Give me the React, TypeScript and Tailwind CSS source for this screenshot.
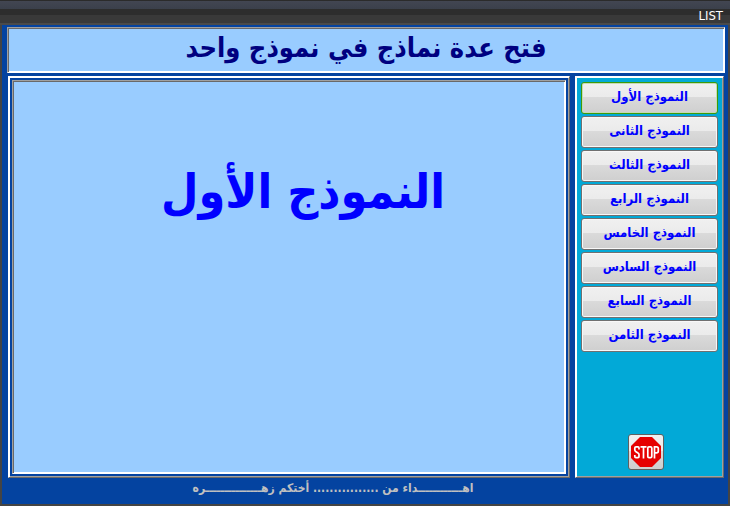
import { useState } from "react";

const FORMS = [
  "النموذج الأول",
  "النموذج الثانى",
  "النموذج الثالث",
  "النموذج الرابع",
  "النموذج الخامس",
  "النموذج السادس",
  "النموذج السابع",
  "النموذج الثامن",
];

// classic two-step bevels
const SUNKEN =
  "border border-t-[#a0a0a0] border-l-[#a0a0a0] border-r-white border-b-white shadow-[inset_1px_1px_0_#696969,inset_-1px_-1px_0_#ffffff]";
const RAISED =
  "border border-t-white border-l-white border-r-[#696969] border-b-[#696969] shadow-[inset_1px_1px_0_#ffffff,inset_-1px_-1px_0_#a0a0a0]";
const FACE =
  "rounded-[3px] border bg-[linear-gradient(#f0f0f0,#ebebeb_46%,#dadada_47%,#cfcfcf)]";

function StopIcon() {
  return (
    <svg viewBox="0 0 30 30" className="size-[30px]" aria-hidden="true">
      <path d="M9 0H21L30 9V21L21 30H9L0 21V9Z" fill="#e60000" />
      <g fill="none" stroke="#ffffff" strokeWidth="1.7">
        <path d="M8 12.500V11Q8 9.800 7 9.800H5Q3.800 9.800 3.800 11V13Q3.800 14 5 14.700L7 16Q8 16.600 8 17.500V19.500Q8 20.700 7 20.700H5Q3.800 20.700 3.800 19.500V18" />
        <path d="M9.500 9.800H15.500M12.500 10V21.500" />
        <path d="M18 9.800H19.500Q20.800 9.800 20.800 11V19.500Q20.800 20.700 19.500 20.700H18Q16.800 20.700 16.800 19.500V11Q16.800 9.800 18 9.800Z" />
        <path d="M23.500 21.500V9.800H25.500Q27.300 9.800 27.300 11.500V14Q27.300 15.800 25.500 15.800H23.500" />
      </g>
    </svg>
  );
}

export default function App() {
  const [active, setActive] = useState(0);

  return (
    <div
      dir="rtl"
      className="flex min-h-screen flex-col bg-[#0443a0] font-['DejaVu_Sans_Condensed','DejaVu_Sans',sans-serif]"
    >
      {/* title bar */}
      <div className="flex h-[25px] flex-col bg-[#393939]">
        <div className="h-[9px] border-t border-[#2b2b2b] bg-[linear-gradient(#424652,#3b404b)]" />
        <div
          dir="ltr"
          className="flex flex-1 items-center justify-end border-b-2 border-[#4a4a4a] bg-[linear-gradient(#2d2d2d_45%,#393939_46%)] pr-[7px] text-[13px] leading-[14px] text-white"
        >
          LIST
        </div>
      </div>

      <div className="flex flex-1 flex-col border-x-2 border-b-2 border-[#444444] pt-[2px] pr-[3px] pl-[5px]">
        <header className={`${SUNKEN} flex h-[46px] justify-center bg-[#99ccff]`}>
          <h1 className="text-[27px] leading-[40px] font-bold text-[#000080]">
            فتح عدة نماذج في نموذج واحد
          </h1>
        </header>

        <div className="mt-[3px] flex flex-1 gap-[5px] px-px">
          <aside
            className={`${RAISED} flex w-[149px] shrink-0 flex-col justify-between bg-[#02a9d7] px-[5px] pt-[5px] pb-[7px]`}
          >
            <nav className="flex w-full flex-col gap-[2px]">
              {FORMS.map((name, i) => (
                <button
                  key={name}
                  type="button"
                  onClick={() => setActive(i)}
                  className={`${FACE} h-[32px] pb-[2px] text-[13px] leading-[16px] font-bold text-[#0000ff] ${
                    i === active
                      ? "border-[#3f9a08] shadow-[inset_0_0_0_1px_#c4dcb4]"
                      : "border-[#707070] shadow-[inset_0_0_0_1px_#f8f8f8]"
                  }`}
                >
                  {name}
                </button>
              ))}
            </nav>
            <div className="flex justify-center ps-2">
              <button
                type="button"
                aria-label="STOP"
                className={`${FACE} flex size-[36px] items-center justify-center border-[#606060]`}
              >
                <StopIcon />
              </button>
            </div>
          </aside>

          <main className={`${RAISED} flex min-w-0 flex-1 bg-[#0443a0] p-[3px]`}>
            <section className={`${SUNKEN} flex flex-1 justify-center bg-[#99ccff] pt-[74px] pl-[28px]`}>
              <h2 className="text-[48px] leading-[72px] font-bold whitespace-nowrap text-[#0000ff]">
                {FORMS[active]}
              </h2>
            </section>
          </main>
        </div>

        <footer className="flex h-[26px] justify-center pr-[66px] text-[12px] leading-[20px] font-bold text-[#c0c0c0]">
          اهــــــــــــداء من ................ أختكم زهـــــــــــــــره
        </footer>
      </div>
    </div>
  );
}
